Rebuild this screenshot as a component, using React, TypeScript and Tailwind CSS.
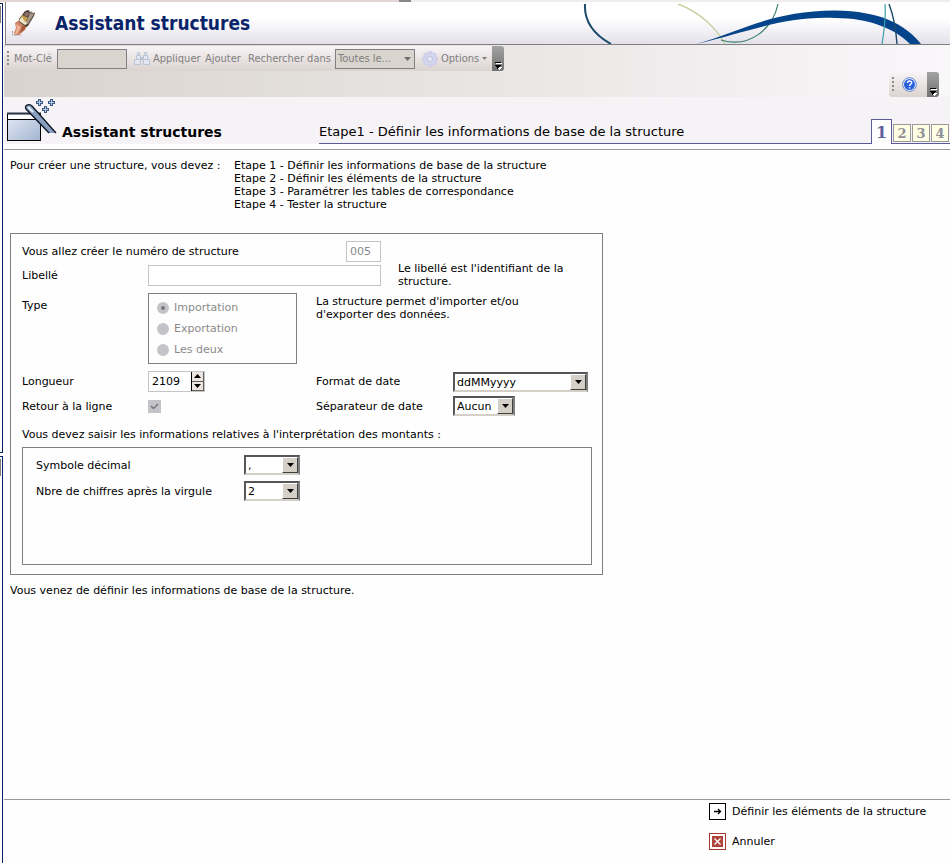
import type { ReactNode } from "react";

const FONT_UI = "font-['DejaVu_Sans','Liberation_Sans',sans-serif]";
const FONT_BAR = "font-['DejaVu_Sans_Condensed','Noto_Sans',sans-serif]";

function BrushIcon() {
  return (
    <svg width="26" height="28" viewBox="0 0 26 28" className="shrink-0">
      <path d="M2.500 22v4h9" fill="none" stroke="#999" strokeWidth="1" strokeDasharray="2 1" />
      <path d="M5 14l4-3 8 6-2 4-6 5H5l-1-2 2-5z" fill="#cf8465" />
      <path d="M6 15l5 3-4 7H5l2-6z" fill="#efb394" />
      <path d="M12 17l4 0-2 4-4 3z" fill="#a85a3e" />
      <path d="M9 10l6-8 3-1 7 3-1 3-6 10-2 1-7-5z" fill="#4f4436" />
      <path d="M12 6l6 3-3 5-5-3z" fill="#c7a04e" />
      <path d="M10 10l2-2 3 5 2-1 0 3-2 1-6-4z" fill="#f1e7c6" />
      <path d="M16 3l4 1-3 4-3-2z" fill="#8d6f6a" />
      <path d="M20 4l4 1-6 10-2-1z" fill="#a39684" />
      <path d="M19 2l5 2" stroke="#ddd" />
    </svg>
  );
}

function HeaderCurves() {
  return (
    <svg width="380" height="40" viewBox="0 0 380 40" className="ml-auto shrink-0 self-end" fill="none">
      <path d="M15 0C14 17 23 30 41 40" stroke="#1c4a6b" strokeWidth="2" />
      <path d="M108 0C130 8 146 24 155 40" stroke="#c5cf9d" strokeWidth="1.4" />
      <path d="M208 0C203 24 180 45 151 36" stroke="#37806a" strokeWidth="1.2" />
      <path d="M126 40C170 28 200 7 265 6.500C310 7 335 20 351 40L340 40C325 25 300 14 265 14C215 12 185 26 126 40Z" fill="#04448a" />
      <path d="M315 0C316 14 314 28 312 40" stroke="#3a9da8" strokeWidth="1.2" />
      <path d="M319 0C324 13 326 26 327 40" stroke="#1c4a6b" strokeWidth="1.4" />
    </svg>
  );
}

function Grip() {
  return (
    <svg width="3" height="15" viewBox="0 0 3 15" className="shrink-0" fill="#8e8a88">
      <rect width="2" height="2" />
      <rect y="4" width="2" height="2" />
      <rect y="8" width="2" height="2" />
      <rect y="12" width="2" height="2" />
    </svg>
  );
}

function BinocularsIcon() {
  return (
    <svg width="16" height="14" viewBox="0 0 16 14" className="shrink-0">
      <g fill="#e1e6f0" stroke="#bcc5d8">
        <path d="M3.500 0.500h2v3h-2zM2.500 3.500h4v4h-4zM0.500 7.500h6v5h-6z" />
        <path d="M10.500 0.500h2v3h-2zM9.500 3.500h4v4h-4zM9.500 7.500h6v5h-6z" />
      </g>
      <path d="M7 5h2v3H7z" fill="#bcc5d8" />
    </svg>
  );
}

function GearIcon() {
  const teeth = [0, 45, 90, 135];
  return (
    <svg width="16" height="16" viewBox="0 0 16 16" className="shrink-0">
      {teeth.map((a) => (
        <rect key={a} x="6" y="0.500" width="4" height="15" rx="1" fill="#d3d5ee" stroke="#c3c5e2" strokeWidth="0.6" transform={`rotate(${a} 8 8)`} />
      ))}
      <circle cx="8" cy="8" r="5.500" fill="#d3d5ee" />
      <circle cx="8" cy="8" r="2.500" fill="#eceaf4" stroke="#bfc2df" />
    </svg>
  );
}

function OverflowHandle() {
  return (
    <button
      type="button"
      aria-label="Options de barre d'outils"
      className="flex h-[25px] w-3 items-end justify-center rounded-r-[3px] bg-gradient-to-b from-[#a3a3a3] to-[#727272] pb-px"
    >
      <svg width="8" height="8" viewBox="0 0 8 8" shapeRendering="crispEdges">
        <path d="M2 1h6v1H2zM3 5h5L5 8z" fill="#fff" />
        <path d="M1 0h6v1H1zM1 3h6v1H6v1H5v1H4v1H3V5H2V4H1z" fill="#000" />
      </svg>
    </button>
  );
}

function HelpIcon() {
  return (
    <svg width="15" height="15" viewBox="0 0 15 15">
      <circle cx="7.500" cy="7.500" r="6.800" fill="#fff" stroke="#5b7fd2" />
      <circle cx="7.500" cy="7.500" r="5.500" fill="#2a5fdc" />
      <path d="M5.500 6C5.500 3.500 9.700 3.500 9.700 5.800C9.700 7.300 7.600 7.200 7.600 9M7.600 10.200v1.400" fill="none" stroke="#fff" strokeWidth="1.500" />
    </svg>
  );
}

function Plus({ x, y }: { x: number; y: number }) {
  return (
    <g transform={`translate(${x} ${y})`} shapeRendering="crispEdges">
      <path d="M2 0h3v2h2v3H5v2H2V5H0V2h2z" fill="#3d5a88" />
      <path d="M3 1h1v2h2v1H4v2H3V4H1V3h2z" fill="#b4c9e6" />
    </g>
  );
}

function WizardIcon() {
  return (
    <svg width="50" height="44" viewBox="0 0 50 44" className="shrink-0">
      <defs>
        <linearGradient id="pane" x1="0" y1="0" x2="1" y2="1">
          <stop offset="0" stopColor="#e4ebf6" />
          <stop offset="1" stopColor="#a3b5d1" />
        </linearGradient>
        <linearGradient id="wand" x1="0" y1="1" x2="1" y2="0">
          <stop offset="0" stopColor="#5c779f" />
          <stop offset="1" stopColor="#b9cbe4" />
        </linearGradient>
      </defs>
      <rect x="0.500" y="15.500" width="33" height="27" fill="url(#pane)" stroke="#000" />
      <rect x="1" y="17" width="32" height="4" fill="#fff" />
      <path d="M1 21.500h32" stroke="#000" />
      <path d="M0 15.500h34" stroke="#2e3645" strokeWidth="2" />
      <path d="M19 11c-2-3 2-6 6-3L49 35h-7z" fill="url(#wand)" />
      <path d="M42 35L19 11c-2-3 2-6 6-3L49 35" fill="none" stroke="#0c1320" strokeWidth="1.300" />
      <path d="M21 9l5 5" stroke="#e6eef8" strokeWidth="2" />
      <Plus x={29} y={1} />
      <Plus x={41} y={1} />
      <Plus x={35} y={8} />
    </svg>
  );
}

function Combo({ id, value, width, options }: { id: string; value: string; width: string; options: string[] }) {
  return (
    <div className={`relative h-5 border-2 border-t-[#55555a] border-r-[#808080] border-b-[#d4d0c8] border-l-[#55555a] bg-white ${width}`}>
      <select id={id} defaultValue={value} className="block h-4 w-full appearance-none bg-transparent pt-px pl-0.5 leading-4 outline-none">
        {options.map((o) => (
          <option key={o}>{o}</option>
        ))}
      </select>
      <span className="pointer-events-none absolute top-0 right-0 flex h-4 w-4 items-center justify-center border border-t-white border-r-[#404040] border-b-[#404040] border-l-white bg-[#d4d0c8]">
        <svg width="7" height="4" viewBox="0 0 7 4">
          <path d="M0 0h7L3.500 4z" />
        </svg>
      </span>
    </div>
  );
}

function Radio({ label, checked }: { label: string; checked?: boolean }) {
  return (
    <label className="flex h-[21px] items-center gap-[5px] text-[#8a8a8a]">
      <input
        type="radio"
        name="type"
        disabled
        defaultChecked={checked}
        className="h-3 w-3 appearance-none rounded-full border-4 border-[#c4c3c7] bg-[#c4c3c7] checked:bg-[#77767a]"
      />
      {label}
    </label>
  );
}

function FooterAction({ icon, children }: { icon: ReactNode; children: ReactNode }) {
  return (
    <button type="button" className="flex items-center gap-1.5 whitespace-nowrap">
      {icon}
      {children}
    </button>
  );
}

const steps = [
  "Etape 1 - Définir les informations de base de la structure",
  "Etape 2 - Définir les éléments de la structure",
  "Etape 3 - Paramétrer les tables de correspondance",
  "Etape 4 - Tester la structure",
];

export default function App() {
  return (
    <div className={`flex min-h-screen flex-col bg-[#fefefe] text-[11px] leading-[13px] text-black ${FONT_UI}`}>
      <div className="flex h-0.5 bg-[#f1eced]">
        <div className="w-[42%] bg-[#e2d6d5]" />
        <div className="w-3 bg-[#8a8588]" />
      </div>

      <div className="flex flex-1">
        <div className="flex w-1 shrink-0 flex-col gap-[3px] bg-white pt-px">
          <div className="h-[450px] w-[3px] border-y border-r border-[#0a246a]">
            <div className="mt-0.5 h-[17px] w-px bg-[#808080]" />
          </div>
          <div className="w-[3px] flex-1 border-t border-r border-[#0a246a]">
            <div className="mt-0.5 h-[17px] w-px bg-[#808080]" />
          </div>
        </div>

        <div className="flex min-w-0 flex-1 flex-col">
          <header className="ml-px flex h-[43px] items-center overflow-hidden border-b border-l border-[#808080] bg-gradient-to-b from-white from-40% to-[#e3e0ea] pl-1">
            <BrushIcon />
            <h1 className={`ml-[19px] text-[19px] leading-6 font-bold whitespace-nowrap text-[#0a246a] ${FONT_BAR}`}>
              Assistant structures
            </h1>
            <HeaderCurves />
          </header>

          <div className="flex h-[52px] items-start justify-between bg-gradient-to-r from-[#d8d3cc] to-[#faf7fb] pt-px">
            <div className={`flex h-[25px] items-center whitespace-nowrap text-[#808080] ${FONT_BAR}`}>
              <div className="flex h-full items-center rounded-l-[3px] bg-gradient-to-b from-[#f8f4f6] to-[#dbd3d0] pl-[3px]">
                <Grip />
                <label htmlFor="keyword" className="w-[47px] pl-1">
                  Mot-Clé
                </label>
                <input id="keyword" disabled className="h-5 w-[70px] border border-[#808080] bg-[#d9d4cd]" />
                <button type="button" className="ml-[7px] flex items-center gap-[3px]">
                  <BinocularsIcon />
                  <span className="w-[45px] text-left">Appliquer</span>
                </button>
                <button type="button" className="ml-[7px] w-9 text-left">
                  Ajouter
                </button>
                <label htmlFor="scope" className="ml-[7px] w-[87px]">
                  Rechercher dans
                </label>
                <div className="relative h-5 w-20">
                  <select id="scope" disabled className="h-5 w-20 appearance-none border border-[#808080] bg-[#d9d4cd] pl-0.5 text-[#808080] opacity-100">
                    <option>Toutes le...</option>
                  </select>
                  <svg width="7" height="4" viewBox="0 0 7 4" className="pointer-events-none absolute top-2 right-1">
                    <path d="M0 0h7L3.500 4z" fill="#707070" />
                  </svg>
                </div>
                <button type="button" className="ml-[7px] flex items-center gap-[3px]">
                  <GearIcon />
                  <span className="w-[38px] text-left">Options</span>
                  <svg width="5" height="3" viewBox="0 0 5 3" className="mr-[5px]">
                    <path d="M0 0h5L2.500 3z" fill="#808080" />
                  </svg>
                </button>
              </div>
              <OverflowHandle />
            </div>
            <div className="mr-[11px] flex h-[25px] items-center self-end">
              <div className="flex h-full w-[38px] items-center gap-[7px] rounded-l-[3px] bg-gradient-to-b from-[#f8f4f6] to-[#dbd3d0] pl-[3px]">
                <Grip />
                <button type="button" aria-label="Aide">
                  <HelpIcon />
                </button>
              </div>
              <OverflowHandle />
            </div>
          </div>

          <div className="border-b border-[#999] pb-[5px]">
            <div className="flex h-[47px] items-end bg-[#f6f3f7] pl-[3px]">
              <div className="mb-0.5">
                <WizardIcon />
              </div>
              <h2 className="mb-1 ml-[5px] w-[257px] text-[14px] leading-4 font-bold whitespace-nowrap">Assistant structures</h2>
              <div className="flex min-w-0 flex-1 items-end">
                <p className="h-[21px] min-w-0 flex-1 truncate border-b border-[#5a5a9c] text-[13px] leading-[18px]">
                  Etape1 - Définir les informations de base de la structure
                </p>
                <nav className="flex items-end font-['DejaVu_Serif',serif] font-bold">
                  <a href="#1" className="flex h-[25px] w-[21px] items-center justify-center border border-b-0 border-[#5a5a9c] bg-[#fefefe] text-[16px] text-[#5f5fa0]">
                    1
                  </a>
                  <div className="flex gap-px border-b border-[#5a5a9c] px-px pb-px text-[13px] text-[#8f8f98]">
                    {["2", "3", "4"].map((n) => (
                      <a key={n} href={`#${n}`} className="flex h-[18px] w-[18px] items-center justify-center border border-[#999] bg-[#ffffe6]">
                        {n}
                      </a>
                    ))}
                  </div>
                </nav>
              </div>
            </div>
          </div>

          <main className="flex-1 px-1.5 pt-[9px]">
            <div className="flex whitespace-nowrap">
              <p className="w-56">Pour créer une structure, vous devez :</p>
              <ul>
                {steps.map((s) => (
                  <li key={s}>{s}</li>
                ))}
              </ul>
            </div>

            <form className="mt-[22px] w-[593px] border border-[#808080] pt-[7px] pr-2.5 pb-[9px] pl-[11px] whitespace-nowrap">
              <div className="flex items-center">
                <label htmlFor="num" className="w-[324px]">
                  Vous allez créer le numéro de structure
                </label>
                <input id="num" disabled defaultValue="005" className="h-[21px] w-[35px] border border-[#c4c4c4] bg-white pl-[3px] text-[#8a8a8a]" />
              </div>
              <div className="flex items-center">
                <label htmlFor="lib" className="w-[126px]">
                  Libellé
                </label>
                <input id="lib" className="h-[21px] w-[233px] border border-[#c4c4c4] bg-white px-1" />
                <p className="ml-[17px]">
                  Le libellé est l'identifiant de la
                  <br />
                  structure.
                </p>
              </div>
              <div role="radiogroup" aria-labelledby="type-label" className="mt-[5px] flex items-start">
                <span id="type-label" className="w-[126px] pt-1.5">
                  Type
                </span>
                <div className="h-[71px] w-[149px] border border-[#808080] pt-[3px] pl-2">
                  <Radio label="Importation" checked />
                  <Radio label="Exportation" />
                  <Radio label="Les deux" />
                </div>
                <p className="ml-[19px] pt-0.5">
                  La structure permet d'importer et/ou
                  <br />
                  d'exporter des données.
                </p>
              </div>
              <div className="mt-[7px] grid grid-cols-[126px_168px_137px_auto] items-center gap-y-1">
                <label htmlFor="len">Longueur</label>
                <div className="flex h-[21px] w-[57px] border border-[#c4c4c4]">
                  <input id="len" defaultValue="2109" className="w-[42px] pl-[3px]" />
                  <div className="flex w-[13px] flex-col border-l border-black bg-[#ece4e0]">
                    <button type="button" aria-label="Augmenter" className="flex flex-1 items-center justify-center border-r border-b border-[#606060]">
                      <svg width="7" height="4" viewBox="0 0 7 4">
                        <path d="M0 4h7L3.500 0z" />
                      </svg>
                    </button>
                    <button type="button" aria-label="Diminuer" className="flex flex-1 items-center justify-center border-r border-b border-[#606060]">
                      <svg width="7" height="4" viewBox="0 0 7 4">
                        <path d="M0 0h7L3.500 4z" />
                      </svg>
                    </button>
                  </div>
                </div>
                <label htmlFor="fmt">Format de date</label>
                <Combo id="fmt" value="ddMMyyyy" width="w-[135px]" options={["ddMMyyyy"]} />

                <label htmlFor="nl">Retour à la ligne</label>
                <div className="relative h-[13px] w-[13px]">
                  <input id="nl" type="checkbox" disabled defaultChecked className="block h-[13px] w-[13px] appearance-none bg-[#c4c3c7]" />
                  <svg width="13" height="13" viewBox="0 0 13 13" className="pointer-events-none absolute inset-0" fill="none">
                    <path d="M3 6l2.500 2.500L10 4" stroke="#77767a" strokeWidth="1.500" />
                  </svg>
                </div>
                <label htmlFor="sep">Séparateur de date</label>
                <Combo id="sep" value="Aucun" width="w-[62px]" options={["Aucun"]} />
              </div>

              <p className="mt-3">Vous devez saisir les informations relatives à l'interprétation des montants :</p>
              <div className="mt-1.5 h-[118px] border border-[#808080] pt-[7px] pl-[13px]">
                <div className="grid grid-cols-[208px_auto] items-center gap-y-1.5">
                  <label htmlFor="dec">Symbole décimal</label>
                  <Combo id="dec" value="," width="w-14" options={[",", "."]} />
                  <label htmlFor="digits">Nbre de chiffres après la virgule</label>
                  <Combo id="digits" value="2" width="w-14" options={["0", "1", "2", "3"]} />
                </div>
              </div>
            </form>
            <p className="mt-[9px]">Vous venez de définir les informations de base de la structure.</p>
          </main>

          <footer className="h-16 border-t border-[#999] pt-[3px]">
            <div className="ml-auto flex w-[241px] flex-col items-start gap-[13px]">
              <FooterAction
                icon={
                  <svg width="17" height="17" viewBox="0 0 17 17" fill="none">
                    <rect x="0.500" y="0.500" width="16" height="16" fill="#fff" stroke="#000" />
                    <path d="M5 8.500h7M9 6l2.500 2.500L9 11" stroke="#000" strokeWidth="1.300" />
                  </svg>
                }
              >
                Définir les éléments de la structure
              </FooterAction>
              <FooterAction
                icon={
                  <svg width="17" height="17" viewBox="0 0 17 17" fill="none">
                    <rect x="0.500" y="0.500" width="16" height="16" fill="#fff" stroke="#a8382f" />
                    <rect x="3" y="3" width="11" height="11" fill="#b0443a" />
                    <path d="M5.500 5.500l6 6M11.500 5.500l-6 6" stroke="#fff" strokeWidth="1.300" />
                  </svg>
                }
              >
                Annuler
              </FooterAction>
            </div>
          </footer>
        </div>
      </div>
    </div>
  );
}
